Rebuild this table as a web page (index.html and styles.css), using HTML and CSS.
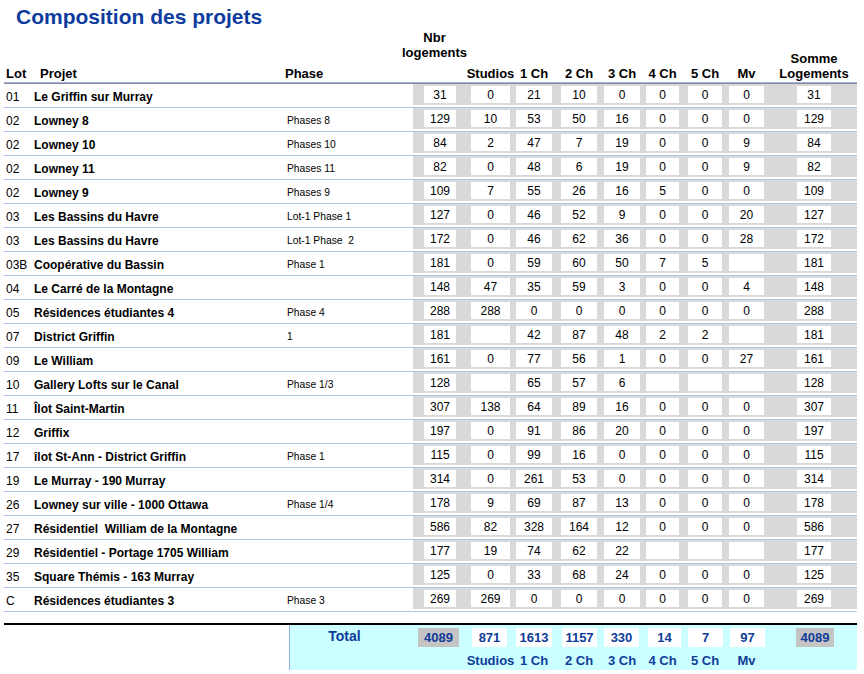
FILE: index.html
```html
<!DOCTYPE html>
<html lang="fr">
<head>
<meta charset="utf-8">
<title>Composition des projets</title>
<link rel="stylesheet" href="styles.css">
</head>
<body>
<div class="page">
  <h1 class="title">Composition des projets</h1>

  <div class="head grid">
    <div class="h-lot">Lot</div>
    <div class="h-name">Projet</div>
    <div class="h-phase">Phase</div>
    <div class="h-num h-nbr"><span>Nbr<br>logements</span></div>
    <div class="h-num"><span class="lbl">Studios</span></div>
    <div class="h-num"><span class="lbl">1 Ch</span></div>
    <div class="h-num"><span class="lbl">2 Ch</span></div>
    <div class="h-num"><span class="lbl">3 Ch</span></div>
    <div class="h-num"><span class="lbl">4 Ch</span></div>
    <div class="h-num"><span class="lbl">5 Ch</span></div>
    <div class="h-num"><span class="lbl">Mv</span></div>
    <div class="h-num"><span class="lbl">Somme<br>Logements</span></div>
    <div></div>
  </div>

  <div class="rows">
    <div class="row grid"><div class="lot">01</div><div class="name">Le Griffin sur Murray</div><div class="phase"></div><div class="num"><span class="box">31</span></div><div class="num"><span class="box">0</span></div><div class="num"><span class="box">21</span></div><div class="num"><span class="box">10</span></div><div class="num"><span class="box">0</span></div><div class="num"><span class="box">0</span></div><div class="num"><span class="box">0</span></div><div class="num"><span class="box">0</span></div><div class="num"><span class="box">31</span></div><div class="tail"></div></div>
    <div class="row grid"><div class="lot">02</div><div class="name">Lowney 8</div><div class="phase">Phases 8</div><div class="num"><span class="box">129</span></div><div class="num"><span class="box">10</span></div><div class="num"><span class="box">53</span></div><div class="num"><span class="box">50</span></div><div class="num"><span class="box">16</span></div><div class="num"><span class="box">0</span></div><div class="num"><span class="box">0</span></div><div class="num"><span class="box">0</span></div><div class="num"><span class="box">129</span></div><div class="tail"></div></div>
    <div class="row grid"><div class="lot">02</div><div class="name">Lowney 10</div><div class="phase">Phases 10</div><div class="num"><span class="box">84</span></div><div class="num"><span class="box">2</span></div><div class="num"><span class="box">47</span></div><div class="num"><span class="box">7</span></div><div class="num"><span class="box">19</span></div><div class="num"><span class="box">0</span></div><div class="num"><span class="box">0</span></div><div class="num"><span class="box">9</span></div><div class="num"><span class="box">84</span></div><div class="tail"></div></div>
    <div class="row grid"><div class="lot">02</div><div class="name">Lowney 11</div><div class="phase">Phases 11</div><div class="num"><span class="box">82</span></div><div class="num"><span class="box">0</span></div><div class="num"><span class="box">48</span></div><div class="num"><span class="box">6</span></div><div class="num"><span class="box">19</span></div><div class="num"><span class="box">0</span></div><div class="num"><span class="box">0</span></div><div class="num"><span class="box">9</span></div><div class="num"><span class="box">82</span></div><div class="tail"></div></div>
    <div class="row grid"><div class="lot">02</div><div class="name">Lowney 9</div><div class="phase">Phases 9</div><div class="num"><span class="box">109</span></div><div class="num"><span class="box">7</span></div><div class="num"><span class="box">55</span></div><div class="num"><span class="box">26</span></div><div class="num"><span class="box">16</span></div><div class="num"><span class="box">5</span></div><div class="num"><span class="box">0</span></div><div class="num"><span class="box">0</span></div><div class="num"><span class="box">109</span></div><div class="tail"></div></div>
    <div class="row grid"><div class="lot">03</div><div class="name">Les Bassins du Havre</div><div class="phase">Lot-1 Phase 1</div><div class="num"><span class="box">127</span></div><div class="num"><span class="box">0</span></div><div class="num"><span class="box">46</span></div><div class="num"><span class="box">52</span></div><div class="num"><span class="box">9</span></div><div class="num"><span class="box">0</span></div><div class="num"><span class="box">0</span></div><div class="num"><span class="box">20</span></div><div class="num"><span class="box">127</span></div><div class="tail"></div></div>
    <div class="row grid"><div class="lot">03</div><div class="name">Les Bassins du Havre</div><div class="phase">Lot-1 Phase &nbsp;2</div><div class="num"><span class="box">172</span></div><div class="num"><span class="box">0</span></div><div class="num"><span class="box">46</span></div><div class="num"><span class="box">62</span></div><div class="num"><span class="box">36</span></div><div class="num"><span class="box">0</span></div><div class="num"><span class="box">0</span></div><div class="num"><span class="box">28</span></div><div class="num"><span class="box">172</span></div><div class="tail"></div></div>
    <div class="row grid"><div class="lot">03B</div><div class="name">Coopérative du Bassin</div><div class="phase">Phase 1</div><div class="num"><span class="box">181</span></div><div class="num"><span class="box">0</span></div><div class="num"><span class="box">59</span></div><div class="num"><span class="box">60</span></div><div class="num"><span class="box">50</span></div><div class="num"><span class="box">7</span></div><div class="num"><span class="box">5</span></div><div class="num"><span class="box"></span></div><div class="num"><span class="box">181</span></div><div class="tail"></div></div>
    <div class="row grid"><div class="lot">04</div><div class="name">Le Carré de la Montagne</div><div class="phase"></div><div class="num"><span class="box">148</span></div><div class="num"><span class="box">47</span></div><div class="num"><span class="box">35</span></div><div class="num"><span class="box">59</span></div><div class="num"><span class="box">3</span></div><div class="num"><span class="box">0</span></div><div class="num"><span class="box">0</span></div><div class="num"><span class="box">4</span></div><div class="num"><span class="box">148</span></div><div class="tail"></div></div>
    <div class="row grid"><div class="lot">05</div><div class="name">Résidences étudiantes 4</div><div class="phase">Phase 4</div><div class="num"><span class="box">288</span></div><div class="num"><span class="box">288</span></div><div class="num"><span class="box">0</span></div><div class="num"><span class="box">0</span></div><div class="num"><span class="box">0</span></div><div class="num"><span class="box">0</span></div><div class="num"><span class="box">0</span></div><div class="num"><span class="box">0</span></div><div class="num"><span class="box">288</span></div><div class="tail"></div></div>
    <div class="row grid"><div class="lot">07</div><div class="name">District Griffin</div><div class="phase">1</div><div class="num"><span class="box">181</span></div><div class="num"><span class="box"></span></div><div class="num"><span class="box">42</span></div><div class="num"><span class="box">87</span></div><div class="num"><span class="box">48</span></div><div class="num"><span class="box">2</span></div><div class="num"><span class="box">2</span></div><div class="num"><span class="box"></span></div><div class="num"><span class="box">181</span></div><div class="tail"></div></div>
    <div class="row grid"><div class="lot">09</div><div class="name">Le William</div><div class="phase"></div><div class="num"><span class="box">161</span></div><div class="num"><span class="box">0</span></div><div class="num"><span class="box">77</span></div><div class="num"><span class="box">56</span></div><div class="num"><span class="box">1</span></div><div class="num"><span class="box">0</span></div><div class="num"><span class="box">0</span></div><div class="num"><span class="box">27</span></div><div class="num"><span class="box">161</span></div><div class="tail"></div></div>
    <div class="row grid"><div class="lot">10</div><div class="name">Gallery Lofts sur le Canal</div><div class="phase">Phase 1/3</div><div class="num"><span class="box">128</span></div><div class="num"><span class="box"></span></div><div class="num"><span class="box">65</span></div><div class="num"><span class="box">57</span></div><div class="num"><span class="box">6</span></div><div class="num"><span class="box"></span></div><div class="num"><span class="box"></span></div><div class="num"><span class="box"></span></div><div class="num"><span class="box">128</span></div><div class="tail"></div></div>
    <div class="row grid"><div class="lot">11</div><div class="name">Îlot Saint-Martin</div><div class="phase"></div><div class="num"><span class="box">307</span></div><div class="num"><span class="box">138</span></div><div class="num"><span class="box">64</span></div><div class="num"><span class="box">89</span></div><div class="num"><span class="box">16</span></div><div class="num"><span class="box">0</span></div><div class="num"><span class="box">0</span></div><div class="num"><span class="box">0</span></div><div class="num"><span class="box">307</span></div><div class="tail"></div></div>
    <div class="row grid"><div class="lot">12</div><div class="name">Griffix</div><div class="phase"></div><div class="num"><span class="box">197</span></div><div class="num"><span class="box">0</span></div><div class="num"><span class="box">91</span></div><div class="num"><span class="box">86</span></div><div class="num"><span class="box">20</span></div><div class="num"><span class="box">0</span></div><div class="num"><span class="box">0</span></div><div class="num"><span class="box">0</span></div><div class="num"><span class="box">197</span></div><div class="tail"></div></div>
    <div class="row grid"><div class="lot">17</div><div class="name">îlot St-Ann - District Griffin</div><div class="phase">Phase 1</div><div class="num"><span class="box">115</span></div><div class="num"><span class="box">0</span></div><div class="num"><span class="box">99</span></div><div class="num"><span class="box">16</span></div><div class="num"><span class="box">0</span></div><div class="num"><span class="box">0</span></div><div class="num"><span class="box">0</span></div><div class="num"><span class="box">0</span></div><div class="num"><span class="box">115</span></div><div class="tail"></div></div>
    <div class="row grid"><div class="lot">19</div><div class="name">Le Murray - 190 Murray</div><div class="phase"></div><div class="num"><span class="box">314</span></div><div class="num"><span class="box">0</span></div><div class="num"><span class="box">261</span></div><div class="num"><span class="box">53</span></div><div class="num"><span class="box">0</span></div><div class="num"><span class="box">0</span></div><div class="num"><span class="box">0</span></div><div class="num"><span class="box">0</span></div><div class="num"><span class="box">314</span></div><div class="tail"></div></div>
    <div class="row grid"><div class="lot">26</div><div class="name">Lowney sur ville - 1000 Ottawa</div><div class="phase">Phase 1/4</div><div class="num"><span class="box">178</span></div><div class="num"><span class="box">9</span></div><div class="num"><span class="box">69</span></div><div class="num"><span class="box">87</span></div><div class="num"><span class="box">13</span></div><div class="num"><span class="box">0</span></div><div class="num"><span class="box">0</span></div><div class="num"><span class="box">0</span></div><div class="num"><span class="box">178</span></div><div class="tail"></div></div>
    <div class="row grid"><div class="lot">27</div><div class="name">Résidentiel &nbsp;William de la Montagne</div><div class="phase"></div><div class="num"><span class="box">586</span></div><div class="num"><span class="box">82</span></div><div class="num"><span class="box">328</span></div><div class="num"><span class="box">164</span></div><div class="num"><span class="box">12</span></div><div class="num"><span class="box">0</span></div><div class="num"><span class="box">0</span></div><div class="num"><span class="box">0</span></div><div class="num"><span class="box">586</span></div><div class="tail"></div></div>
    <div class="row grid"><div class="lot">29</div><div class="name">Résidentiel - Portage 1705 William</div><div class="phase"></div><div class="num"><span class="box">177</span></div><div class="num"><span class="box">19</span></div><div class="num"><span class="box">74</span></div><div class="num"><span class="box">62</span></div><div class="num"><span class="box">22</span></div><div class="num"><span class="box"></span></div><div class="num"><span class="box"></span></div><div class="num"><span class="box"></span></div><div class="num"><span class="box">177</span></div><div class="tail"></div></div>
    <div class="row grid"><div class="lot">35</div><div class="name">Square Thémis - 163 Murray</div><div class="phase"></div><div class="num"><span class="box">125</span></div><div class="num"><span class="box">0</span></div><div class="num"><span class="box">33</span></div><div class="num"><span class="box">68</span></div><div class="num"><span class="box">24</span></div><div class="num"><span class="box">0</span></div><div class="num"><span class="box">0</span></div><div class="num"><span class="box">0</span></div><div class="num"><span class="box">125</span></div><div class="tail"></div></div>
    <div class="row grid"><div class="lot">C</div><div class="name">Résidences étudiantes 3</div><div class="phase">Phase 3</div><div class="num"><span class="box">269</span></div><div class="num"><span class="box">269</span></div><div class="num"><span class="box">0</span></div><div class="num"><span class="box">0</span></div><div class="num"><span class="box">0</span></div><div class="num"><span class="box">0</span></div><div class="num"><span class="box">0</span></div><div class="num"><span class="box">0</span></div><div class="num"><span class="box">269</span></div><div class="tail"></div></div>
  </div>

  <div class="total-wrap">
    <div class="total-box">
      <div class="tgrid">
        <div class="t-label">Total</div>
        <div class="tnum"><span class="tb gray first">4089</span></div>
        <div class="tnum"><span class="tb">871</span></div>
        <div class="tnum"><span class="tb">1613</span></div>
        <div class="tnum"><span class="tb">1157</span></div>
        <div class="tnum"><span class="tb">330</span></div>
        <div class="tnum"><span class="tb">14</span></div>
        <div class="tnum"><span class="tb">7</span></div>
        <div class="tnum"><span class="tb">97</span></div>
        <div class="tnum"><span class="tb gray last">4089</span></div>
        <div></div>

        <div></div>
        <div class="tnum"></div>
        <div class="tnum"><span class="tl">Studios</span></div>
        <div class="tnum"><span class="tl">1 Ch</span></div>
        <div class="tnum"><span class="tl">2 Ch</span></div>
        <div class="tnum"><span class="tl">3 Ch</span></div>
        <div class="tnum"><span class="tl">4 Ch</span></div>
        <div class="tnum"><span class="tl">5 Ch</span></div>
        <div class="tnum"><span class="tl">Mv</span></div>
        <div class="tnum"></div>
        <div></div>
      </div>
    </div>
  </div>
</div>
</body>
</html>
```

FILE: styles.css
```css
html, body {
  margin: 0;
  padding: 0;
  background: #ffffff;
}

body {
  font-family: "Liberation Sans", Arial, sans-serif;
  color: #000000;
}

.page {
  width: 853px;
  margin-left: 4px;
}

.title {
  margin: 5px 0 0 12px;
  font-size: 21px;
  line-height: 24px;
  font-weight: bold;
  color: #0d3c9e;
}

.grid {
  display: grid;
  grid-template-columns: 29px 252px 128px 43px 54px 42px 45px 43px 39px 43px 42px 67px 26px;
}

/* header */
.head {
  height: 53px;
  align-items: end;
  font-size: 13px;
  line-height: 15px;
  font-weight: bold;
  border-bottom: 1px solid #9fb2ee;
}

.head > div {
  padding-bottom: 1px;
}

.h-lot { padding-left: 2px; }
.h-name { padding-left: 7px; }
.h-phase { padding-left: 0; }

.h-num {
  display: flex;
  justify-content: flex-end;
}

.h-num .lbl {
  display: flex;
  justify-content: center;
  text-align: center;
  white-space: nowrap;
}

.h-nbr {
  align-self: start;
  justify-content: center;
  text-align: center;
  white-space: nowrap;
  padding-top: 1px;
}

.h-num:nth-child(5) .lbl { width: 39px; }
.h-num:nth-child(6) .lbl { width: 36px; }
.h-num:nth-child(7) .lbl { width: 36px; }
.h-num:nth-child(8) .lbl { width: 36px; }
.h-num:nth-child(9) .lbl { width: 33px; }
.h-num:nth-child(10) .lbl { width: 34px; }
.h-num:nth-child(11) .lbl { width: 35px; }
.h-num:nth-child(12) .lbl { width: 34px; }

/* rows */
.rows {
  border-top: 1px solid #8a8a8a;
}

.row {
  height: 23px;
  border-bottom: 1px solid #b3c2ef;
  align-items: start;
}

.lot, .name, .phase {
  height: 23px;
  display: flex;
  align-items: center;
  padding-top: 2px;
  box-sizing: border-box;
  white-space: pre;
}

.lot {
  font-size: 12px;
  padding-left: 2px;
}

.name {
  font-size: 12px;
  font-weight: bold;
  padding-left: 1px;
}

.phase {
  font-size: 10.3px;
  padding-left: 2px;
}

.num, .tail {
  height: 21px;
  background: #d9d9d9;
  display: flex;
  justify-content: flex-end;
  align-items: flex-start;
}

.box {
  display: flex;
  align-items: center;
  justify-content: center;
  height: 17px;
  margin-top: 2px;
  padding-top: 1px;
  box-sizing: border-box;
  background: #ffffff;
  font-size: 12px;
}

.row .num:nth-child(4) .box { width: 32px; }
.row .num:nth-child(5) .box { width: 39px; }
.row .num:nth-child(6) .box { width: 36px; }
.row .num:nth-child(7) .box { width: 36px; }
.row .num:nth-child(8) .box { width: 36px; }
.row .num:nth-child(9) .box { width: 33px; }
.row .num:nth-child(10) .box { width: 34px; }
.row .num:nth-child(11) .box { width: 35px; }
.row .num:nth-child(12) .box { width: 34px; }

/* totals */
.total-wrap {
  margin-top: 11px;
  border-top: 2px solid #000000;
}

.total-box {
  margin-left: 285px;
  width: 567px;
  background: #ccffff;
  border-left: 1px solid #93ade8;
  padding: 3px 0 2px 0;
}

.tgrid {
  display: grid;
  grid-template-columns: 123px 43px 54px 42px 45px 43px 39px 43px 42px 67px 26px;
  grid-template-rows: 19px 16px;
  row-gap: 5px;
  color: #0f3c99;
  font-weight: bold;
  font-size: 13px;
}

.t-label {
  font-size: 14px;
  line-height: 17px;
  text-align: center;
  padding-right: 14px;
}

.tnum {
  display: flex;
  justify-content: flex-end;
}

.tb {
  display: flex;
  align-items: center;
  justify-content: center;
  height: 19px;
  background: #ffffff;
}

.tb.gray {
  background: #c4c4c4;
}

.tb.first { width: 41px; margin-right: -3px; }
.tb.last { width: 38px; margin-right: -3px; }

.tgrid .tnum:nth-child(3) .tb { width: 35px; margin-right: 3px; }
.tgrid .tnum:nth-child(4) .tb { width: 36px; }
.tgrid .tnum:nth-child(5) .tb { width: 35px; }
.tgrid .tnum:nth-child(6) .tb { width: 35px; margin-right: 1px; }
.tgrid .tnum:nth-child(7) .tb { width: 33px; margin-right: -2px; }
.tgrid .tnum:nth-child(8) .tb { width: 35px; margin-right: -1px; }
.tgrid .tnum:nth-child(9) .tb { width: 35px; margin-right: -1px; }

.tl {
  display: flex;
  justify-content: center;
  white-space: nowrap;
  line-height: 16px;
  padding-top: 1px;
}

.tgrid .tnum:nth-child(14) .tl { width: 39px; }
.tgrid .tnum:nth-child(15) .tl { width: 36px; }
.tgrid .tnum:nth-child(16) .tl { width: 36px; }
.tgrid .tnum:nth-child(17) .tl { width: 36px; }
.tgrid .tnum:nth-child(18) .tl { width: 33px; }
.tgrid .tnum:nth-child(19) .tl { width: 34px; }
.tgrid .tnum:nth-child(20) .tl { width: 35px; }
```
